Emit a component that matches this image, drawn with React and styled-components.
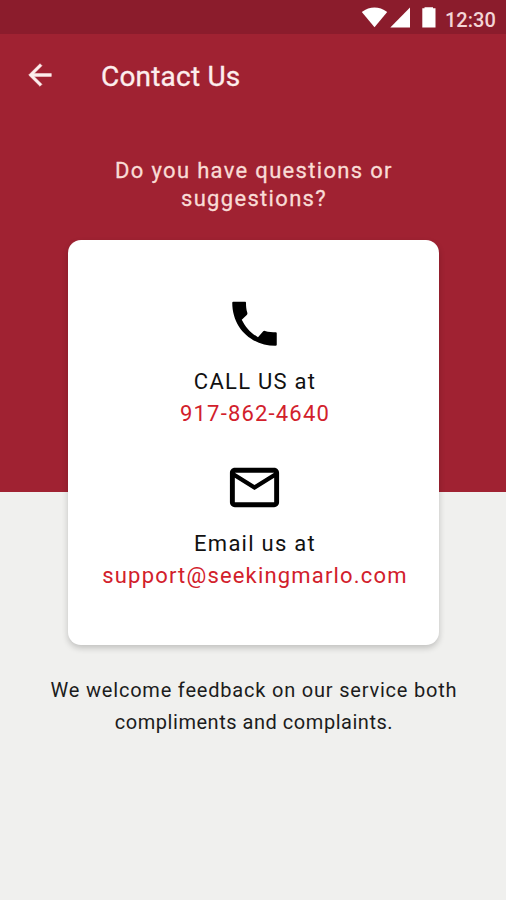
import React from "react";
import styled, { createGlobalStyle } from "styled-components";

const GlobalStyle = createGlobalStyle`
  * { box-sizing: border-box; }
  body { margin: 0; }
`;

const Screen = styled.div`
  display: flex;
  flex-direction: column;
  width: 506px;
  height: 900px;
  overflow: hidden;
  background: linear-gradient(#a02232 0 492px, #f0f0ee 492px);
  font-family: Roboto, sans-serif;
`;

const StatusBar = styled.div`
  display: flex;
  justify-content: flex-end;
  flex: none;
  height: 34px;
  background: #8b1c2c;
`;

const StatusIcons = styled.svg`
  display: block;
  width: 80px;
  height: 34px;
`;

const Clock = styled.time`
  width: 66px;
  padding-left: 5px;
  color: #f3d5d6;
  font-size: 20px;
  font-weight: 500;
  line-height: 41px;
  white-space: nowrap;
`;

const AppBar = styled.header`
  display: flex;
  align-items: center;
  flex: none;
  height: 84px;
  padding-left: 23px;
`;

const BackButton = styled.button`
  display: block;
  width: 34px;
  height: 34px;
  margin: 0 44px 2px 0;
  padding: 0;
  border: 0;
  background: none;
  color: #fdeeed;
`;

const Title = styled.h1`
  margin: 2px 0 0;
  color: #fdeeed;
  font-size: 28px;
  font-weight: 400;
  line-height: 32px;
  letter-spacing: 0.2px;
  -webkit-text-stroke: 0.3px currentColor;
`;

const Question = styled.p`
  flex: none;
  margin: 39px 0 0;
  padding-left: 2px;
  color: #f9dcd6;
  font-size: 22px;
  line-height: 28px;
  letter-spacing: 1.32px;
  text-align: center;
  -webkit-text-stroke: 0.3px currentColor;
`;

const Card = styled.main`
  display: flex;
  flex-direction: column;
  align-items: center;
  flex: none;
  width: 371px;
  height: 405px;
  margin: 27px 0 0 68px;
  padding: 54px 0 0 2px;
  border-radius: 13px;
  background: #fff;
  box-shadow: 0 3px 6px rgba(0, 0, 0, 0.2);
`;

const ContactIcon = styled.svg`
  display: block;
  flex: none;
  width: ${(p) => p.$size}px;
  height: ${(p) => p.$size}px;
  margin-top: ${(p) => p.$top || 0}px;
  fill: #000;
`;

const Label = styled.div`
  margin-top: ${(p) => p.$top}px;
  padding-left: 1px;
  color: #111;
  font-size: 22px;
  line-height: 32px;
  letter-spacing: 1.25px;
`;

const ContactLink = styled.a`
  padding-left: 1px;
  color: #d2202b;
  font-size: 22px;
  line-height: 32px;
  letter-spacing: 1.18px;
  white-space: nowrap;
  text-decoration: none;
`;

const Footer = styled.p`
  flex: none;
  margin: 29px 0 0;
  padding-left: 2px;
  color: #1c1c1c;
  font-size: 20px;
  line-height: 32px;
  text-align: center;
`;

const FooterLine = styled.span`
  display: block;
  letter-spacing: ${(p) => p.$spacing}px;
`;

export default function App() {
  return (
    <>
      <GlobalStyle />
      <Screen>
        <StatusBar>
          <StatusIcons viewBox="0 0 80 34" fill="#fff">
            <path d="M1.800 12Q14.500 3.200 27.200 12L14.500 27.200Z" />
            <path d="M50 7.500V27.500H30.300Z" />
            <path d="M62.300 8.300H64.500V7.300H73V8.300H75.500V27.600H62.300Z" />
          </StatusIcons>
          <Clock>12:30</Clock>
        </StatusBar>
        <AppBar>
          <BackButton aria-label="Back">
            <svg
              viewBox="0 0 24 24"
              width="34"
              height="34"
              fill="currentColor"
              stroke="currentColor"
              strokeWidth="0.35"
            >
              <path d="M20 11H7.830l5.590-5.590L12 4l-8 8 8 8 1.410-1.410L7.830 13H20v-2z" />
            </svg>
          </BackButton>
          <Title>Contact Us</Title>
        </AppBar>
        <Question>
          Do you have questions or
          <br />
          suggestions?
        </Question>
        <Card>
          <ContactIcon viewBox="0 0 24 24" $size={60}>
            <path d="M3.300 3.100H8.100Q8.400 3.100 8.400 3.500C8.400 5 8.500 6.100 8.900 7.400Q9.100 8 8.700 8.400L6.700 10.300C8.300 13.500 10.200 15.500 13.200 17.300L15.200 15Q15.500 14.600 16 14.750C17.500 15.200 19 15.300 20.300 15.300Q20.700 15.300 20.700 15.700V20.300Q20.700 20.700 20.200 20.700C10.400 20.700 2.900 13.500 2.900 3.500Q2.900 3.100 3.300 3.100Z" />
          </ContactIcon>
          <Label $top={12}>CALL US at</Label>
          <ContactLink href="tel:917-862-4640">917-862-4640</ContactLink>
          <ContactIcon viewBox="0 0 24 24" $size={59} $top={28}>
            <path d="M22 6c0-1.100-.9-2-2-2H4c-1.100 0-2 .9-2 2v12c0 1.100.9 2 2 2h16c1.100 0 2-.9 2-2V6zm-2 0l-8 5-8-5h16zm0 12H4V8l8 5 8-5v10z" />
          </ContactIcon>
          <Label $top={11}>Email us at</Label>
          <ContactLink href="mailto:support@seekingmarlo.com">
            support@seekingmarlo.com
          </ContactLink>
        </Card>
        <Footer>
          <FooterLine $spacing={0.8}>We welcome feedback on our service both</FooterLine>
          <FooterLine $spacing={0.53}>compliments and complaints.</FooterLine>
        </Footer>
      </Screen>
    </>
  );
}
